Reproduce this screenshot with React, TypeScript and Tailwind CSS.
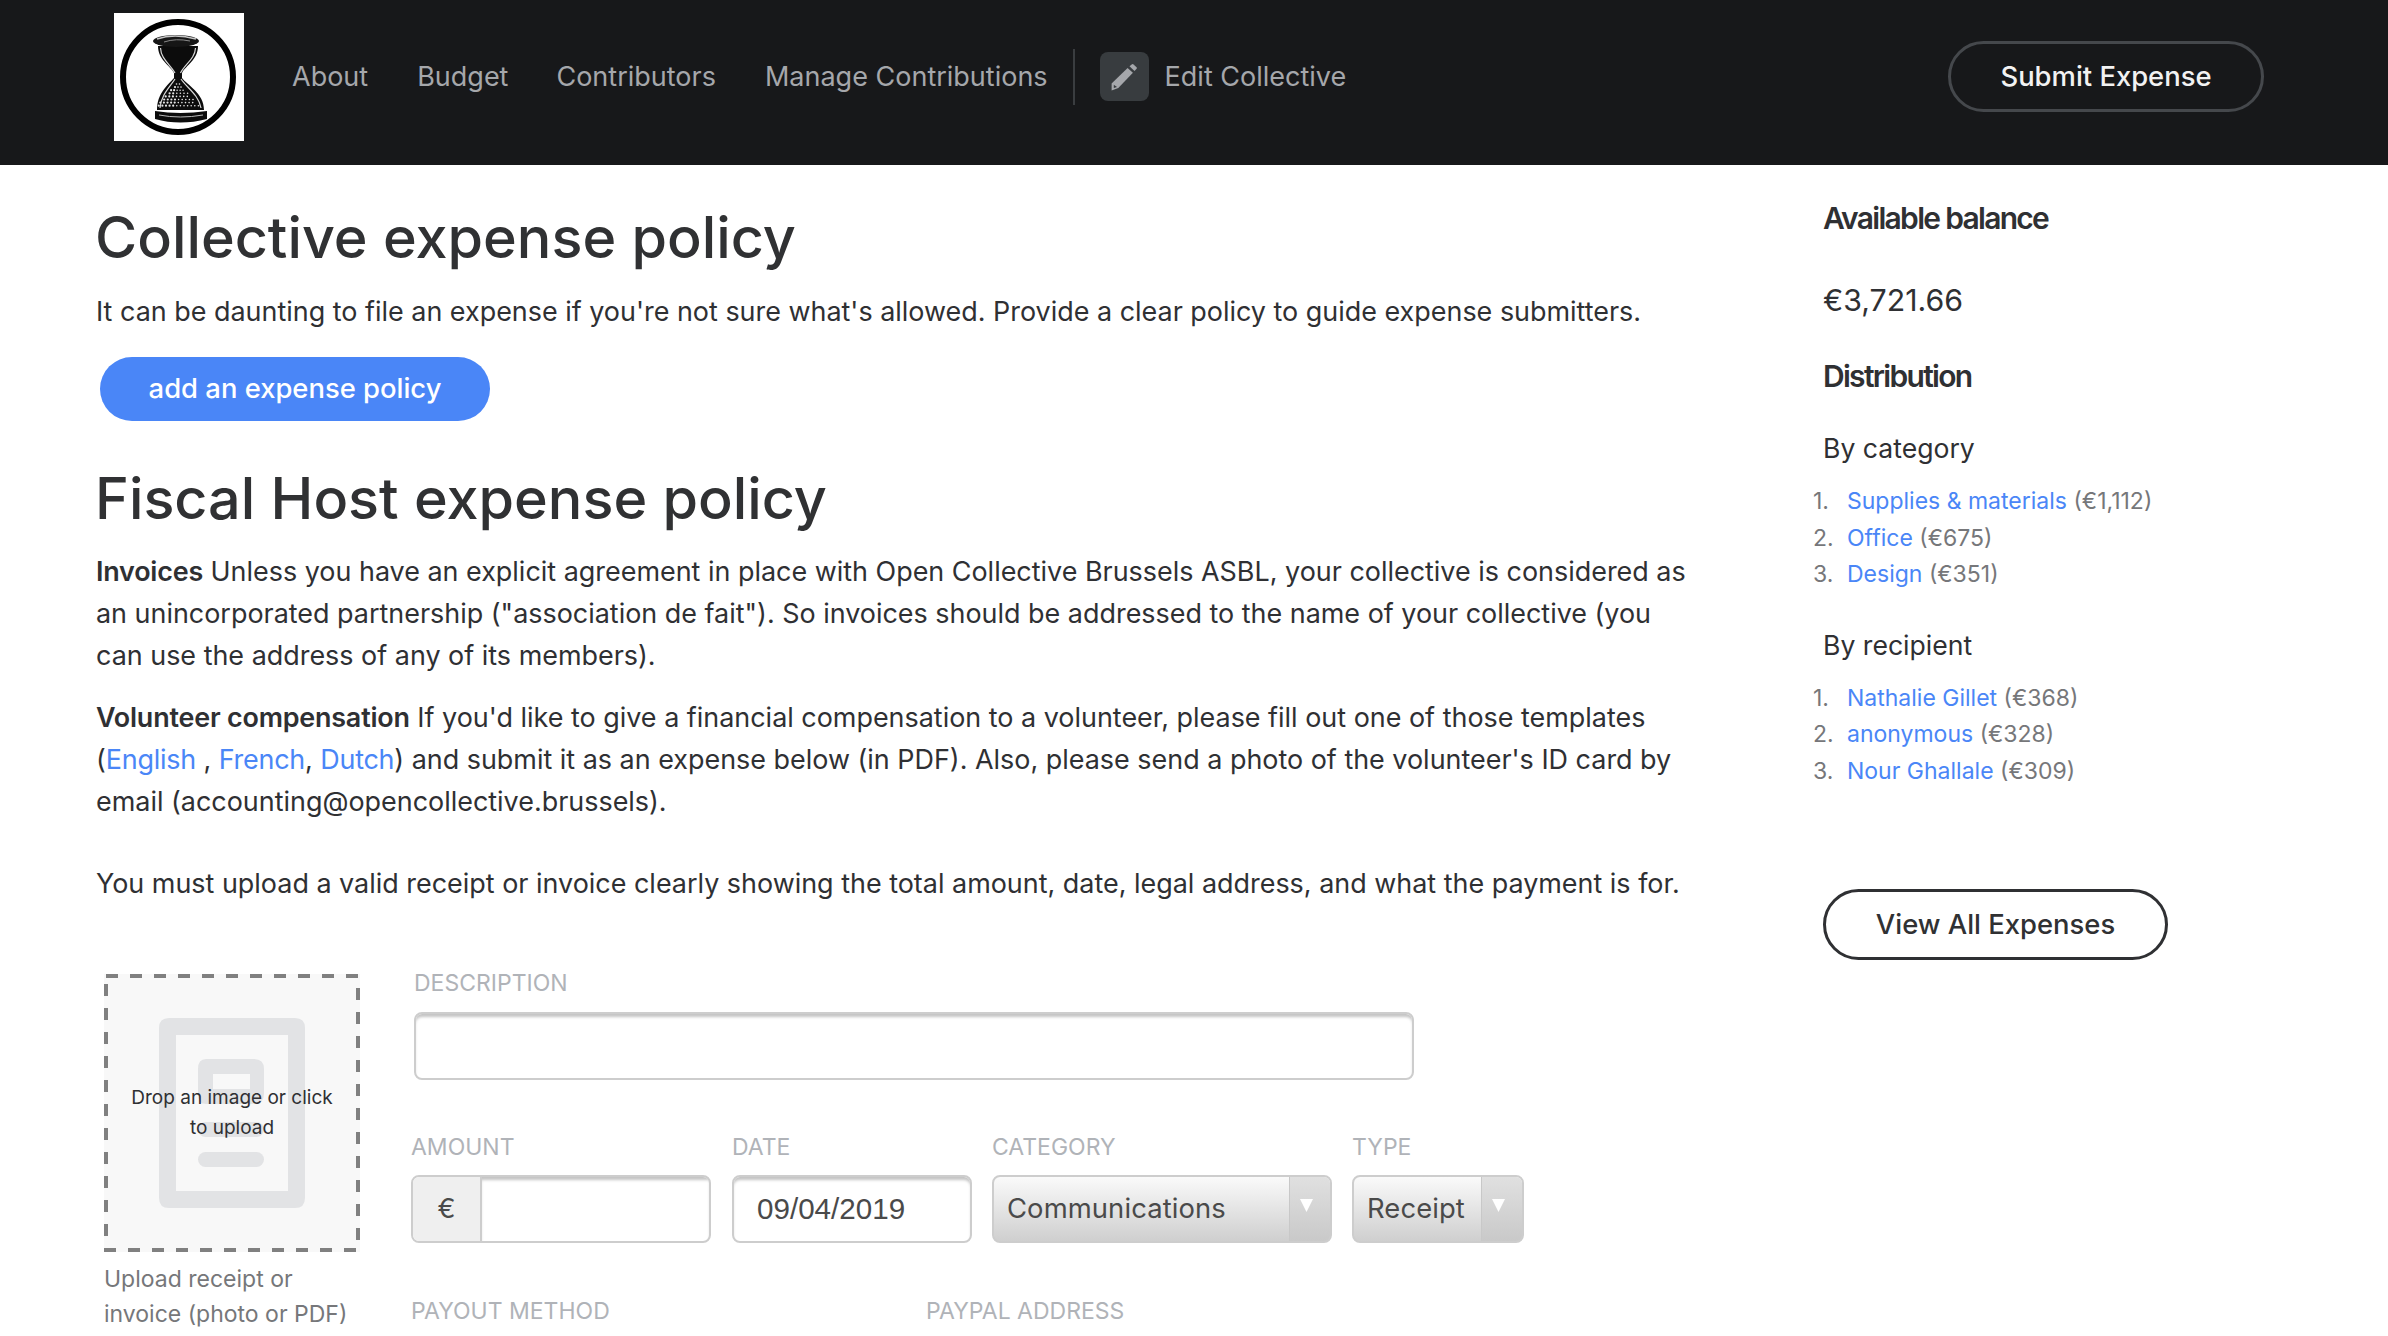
import React from 'react';

const inter = { fontFamily: 'Inter, sans-serif' };

// specks of sand in the lower bulb of the logo
const sandDots: [number, number][] = [];
for (let row = 0; row < 8; row++) {
  const y = 70 + row * 3.1;
  const half = 1.5 + row * 2.7;
  const step = row < 3 ? 3 : 3.6;
  for (let x = 64 - half; x <= 64 + half; x += step) {
    sandDots.push([x + (row % 2) * 1.2, y + 1]);
  }
}

function HourglassLogo() {
  return (
    <div className="w-[130px] h-[128px] bg-white shrink-0">
      <svg viewBox="0 0 130 128" className="w-full h-full">
        <circle cx="64" cy="64" r="55" fill="none" stroke="#000" strokeWidth="6" />
        <path d="M44 33 C44 47 56 52 60 60 V65 C54 72 43 80 43 97 H90 C90 80 73 72 68 65 V60 C72 52 84 47 84 33 Z" fill="#0c0c0c" />
        <path d="M46.5 35 C47 46 56 51 61 60 M81.5 35 C81 46 71 51 66.5 60" stroke="#d8d8d8" strokeWidth="1.2" fill="none" />
        <path d="M61 66 C56 74 47 82 46 95 M67 66 C72 74 85 82 87 95" stroke="#d8d8d8" strokeWidth="1.2" fill="none" />
        {sandDots.map(([x, y], i) => (
          <circle key={i} cx={x} cy={y} r={x < 62 ? 1.1 : 0.8} fill="#e6e6e6" />
        ))}
        <ellipse cx="62" cy="28" rx="23" ry="6" fill="#161616" />
        <path d="M43 26 Q60 20 82 26" stroke="#c4c4c4" strokeWidth="1.5" fill="none" />
        <path d="M50 29 Q62 25 76 28" stroke="#8a8a8a" strokeWidth="1" fill="none" />
        <path d="M41 98 Q66 102 93 98 V106 Q66 113 41 106 Z" fill="#0c0c0c" />
        <path d="M45 102 Q66 106 89 102" stroke="#b8b8b8" strokeWidth="1" fill="none" />
      </svg>
    </div>
  );
}

function NavBar() {
  return (
    <header className="h-[165px] bg-[#17181a] flex items-center pl-[114px] pr-[124px] pb-[12px]">
      <HourglassLogo />
      <nav className="flex items-center ml-[48px] text-[27px] text-[#a5a7ab]">
        <a className="mr-[49px] pt-[2px]">About</a>
        <a className="mr-[48px] pt-[2px]">Budget</a>
        <a className="mr-[49px] pt-[2px]">Contributors</a>
        <a className="pt-[2px]">Manage Contributions</a>
        <div className="w-[2px] h-[56px] bg-[#3a3d40] ml-[25px] mr-[25px]" />
        <div className="w-[49px] h-[49px] rounded-[8px] bg-[#383c3f] flex items-center justify-center mr-[16px]">
          <svg viewBox="0 0 28 28" className="w-[28px] h-[28px]" fill="#a5a7ab">
            <path d="M19.5 3.2 L22 1.2 Q22.8 0.8 23.5 1.4 L26.6 4.2 Q27.2 5 26.6 5.7 L24.5 8 Z" />
            <path d="M17.6 5 L22.9 9.8 L8.3 25 L1.6 27.5 L1.6 20.5 Z" />
            <path d="M3.8 21.8 L3.8 25 L7 24 Z" fill="#383c3f" />
          </svg>
        </div>
        <a className="pt-[2px]">Edit Collective</a>
      </nav>
      <button className="ml-auto w-[316px] h-[71px] rounded-full border-[3px] border-[#45484c] text-[#f2f2f2] text-[27.4px] font-medium flex items-center justify-center">
        Submit Expense
      </button>
    </header>
  );
}

function FieldLabel({ children, className = '' }: { children: React.ReactNode; className?: string }) {
  return <div className={`text-[23px] leading-[30px] text-[#b0b3b8] uppercase ${className}`}>{children}</div>;
}

function SelectBox({ width, value }: { width: string; value: string }) {
  return (
    <div className={`${width} h-[68px] rounded-[8px] border-2 border-[#cdcdcd] bg-gradient-to-b from-[#fafafa] to-[#cfcfcf] flex overflow-hidden`}>
      <div className="flex-1 flex items-center pl-[13px] text-[27.4px] tracking-[0.1px] text-[#4a4a4a]">{value}</div>
      <div className="w-[41px] bg-gradient-to-b from-[#e0e0e0] to-[#c9c9c9] border-l border-[#c8c8c8] pl-[10px] pt-[22px]">
        <svg viewBox="0 0 13 13" className="w-[13px] h-[13px]"><path d="M0 0 H13 L6.5 13 Z" fill="#fff" /></svg>
      </div>
    </div>
  );
}

function UploadBox() {
  return (
    <div className="w-[307px] ml-[8px] shrink-0">
      <div className="relative w-[256px] h-[278px] bg-[#f8f8f8] flex items-center justify-center text-center overflow-hidden">
        <svg className="absolute inset-0 w-full h-full" viewBox="0 0 256 278">
          <rect x="2" y="2" width="252" height="274" fill="none" stroke="#808080" strokeWidth="4" strokeDasharray="12 12" />
        </svg>
        <svg className="absolute left-[55px] top-[44px] w-[146px] h-[190px]" viewBox="0 0 146 190">
          <path fillRule="evenodd" d="M10 0 H136 Q146 0 146 10 V180 Q146 190 136 190 H10 Q0 190 0 180 V10 Q0 0 10 0 Z M17 17 V173 H129 V17 Z" fill="#e2e3e5" />
          <path fillRule="evenodd" d="M47 41 H95 Q105 41 105 51 V76 Q105 86 95 86 H47 Q39 86 39 76 V51 Q39 41 47 41 Z M54 56 V71 H91 V56 Z" fill="#e2e3e5" />
          <rect x="39" y="104" width="66" height="15" rx="7.5" fill="#e2e3e5" />
          <rect x="39" y="134" width="66" height="15" rx="7.5" fill="#e2e3e5" />
        </svg>
        <div className="relative px-[20px] text-[19px] leading-[30px] text-[#2f3033]">Drop an image or click to upload</div>
      </div>
      <div className="mt-[10px] text-[23px] leading-[35px] text-[#76777a]">Upload receipt or<br />invoice (photo or PDF)</div>
    </div>
  );
}

function ExpenseForm() {
  return (
    <div className="flex mt-[69px]">
      <UploadBox />
      <div className="flex-1">
        <FieldLabel className="ml-[3px] mt-[-6px]">Description</FieldLabel>
        <div className="ml-[3px] mt-[14px] w-[1000px] h-[68px] rounded-[8px] border-2 border-[#cdcdcd] shadow-[inset_0_4px_3px_-1px_#c4c4c4]" />
        <div className="flex mt-[52px]">
          <div className="w-[321px]">
            <FieldLabel>Amount</FieldLabel>
            <div className="mt-[13px] w-[300px] h-[68px] rounded-[8px] border-2 border-[#cdcdcd] flex overflow-hidden">
              <div className="w-[69px] bg-[#efefef] border-r-2 border-[#cdcdcd] flex items-center justify-center text-[27px] text-[#4a4a4a]">€</div>
              <div className="flex-1 shadow-[inset_0_4px_3px_-1px_#c4c4c4]" />
            </div>
          </div>
          <div className="w-[260px]">
            <FieldLabel>Date</FieldLabel>
            <div className="mt-[13px] w-[240px] h-[68px] rounded-[8px] border-2 border-[#cdcdcd] shadow-[inset_0_4px_3px_-1px_#c4c4c4] flex items-center pl-[23px] text-[29.6px] text-[#4a4a4a]" style={{ fontFamily: '"Liberation Sans", sans-serif' }}>09/04/2019</div>
          </div>
          <div className="w-[360px]">
            <FieldLabel>Category</FieldLabel>
            <div className="mt-[13px]"><SelectBox width="w-[340px]" value="Communications" /></div>
          </div>
          <div>
            <FieldLabel>Type</FieldLabel>
            <div className="mt-[13px]"><SelectBox width="w-[172px]" value="Receipt" /></div>
          </div>
        </div>
        <div className="flex mt-[53px]">
          <FieldLabel className="w-[515px]">Payout method</FieldLabel>
          <FieldLabel>PayPal address</FieldLabel>
        </div>
      </div>
    </div>
  );
}

function MainColumn() {
  return (
    <main className="w-[1700px] pl-[96px] pt-[32px] shrink-0">
      <h1 className="text-[57.5px] leading-[80px] font-medium text-[#303133] -ml-[1px]">Collective expense policy</h1>
      <p className="mt-[13px] text-[26.93px] leading-[42px] text-[#2f3033]">It can be daunting to file an expense if you're not sure what's allowed. Provide a clear policy to guide expense submitters.</p>
      <button className="block mt-[25px] ml-[4px] w-[390px] h-[64px] rounded-full bg-[#4a86f7] text-white text-[27.4px] font-medium">add an expense policy</button>
      <h1 className="mt-[37px] text-[57.5px] leading-[80px] font-medium text-[#303133] -ml-[1px]">Fiscal Host expense policy</h1>
      <p className="mt-[12px] text-[26.93px] leading-[42px] text-[#2f3033]">
        <b className="font-semibold tracking-[-0.2px]">Invoices</b> Unless you have an explicit agreement in place with Open Collective Brussels ASBL, your collective is considered as an unincorporated partnership ("association de fait"). So invoices should be addressed to the name of your collective (you can use the address of any of its members).
      </p>
      <p className="mt-[20px] text-[26.93px] leading-[42px] text-[#2f3033]">
        <b className="font-semibold tracking-[-0.2px]">Volunteer compensation</b> If you'd like to give a financial compensation to a volunteer, please fill out one of those templates (<a className="text-[#4a86f7] tracking-[-0.25px]">English</a> , <a className="text-[#4a86f7] tracking-[-0.25px]">French</a>, <a className="text-[#4a86f7] tracking-[-0.25px]">Dutch</a>) and submit it as an expense below (in PDF). Also, please send a photo of the volunteer's ID card by email (accounting@opencollective.brussels).
      </p>
      <p className="mt-[40px] text-[26.93px] leading-[42px] text-[#2f3033]">You must upload a valid receipt or invoice clearly showing the total amount, date, legal address, and what the payment is for.</p>
      <div className="pt-[1px]"><ExpenseForm /></div>
    </main>
  );
}

function RankedList({ items }: { items: [string, string][] }) {
  return (
    <ol className="mt-[14px] text-[23px] leading-[36.5px] text-[#76777a]">
      {items.map(([name, amount], i) => (
        <li key={name} className="flex">
          <span className="w-[34px] -ml-[10px] shrink-0">{i + 1}.</span>
          <span><a className="text-[#4a86f7]">{name}</a> ({amount})</span>
        </li>
      ))}
    </ol>
  );
}

function Sidebar() {
  return (
    <aside className="flex-1 pl-[123px] pt-[32px] text-[#2f3033]">
      <h3 className="text-[30px] leading-[42px] font-semibold tracking-[-1.7px]">Available balance</h3>
      <div className="mt-[40px] text-[30.3px] leading-[42px]">€3,721.66</div>
      <h3 className="mt-[34px] text-[30px] leading-[42px] font-semibold tracking-[-1.7px]">Distribution</h3>
      <h4 className="mt-[30px] text-[26.6px] leading-[42px]">By category</h4>
      <RankedList items={[['Supplies & materials', '€1,112'], ['Office', '€675'], ['Design', '€351']]} />
      <h4 className="mt-[31px] text-[26.6px] leading-[42px]">By recipient</h4>
      <RankedList items={[['Nathalie Gillet', '€368'], ['anonymous', '€328'], ['Nour Ghallale', '€309']]} />
      <button className="mt-[100px] w-[345px] h-[71px] rounded-full border-[3px] border-[#2f3033] text-[#303133] text-[27.4px] font-medium">View All Expenses</button>
    </aside>
  );
}

export default function App() {
  return (
    <div className="w-[2388px] h-[1336px] overflow-hidden bg-white" style={inter}>
      <NavBar />
      <div className="flex">
        <MainColumn />
        <Sidebar />
      </div>
    </div>
  );
}
